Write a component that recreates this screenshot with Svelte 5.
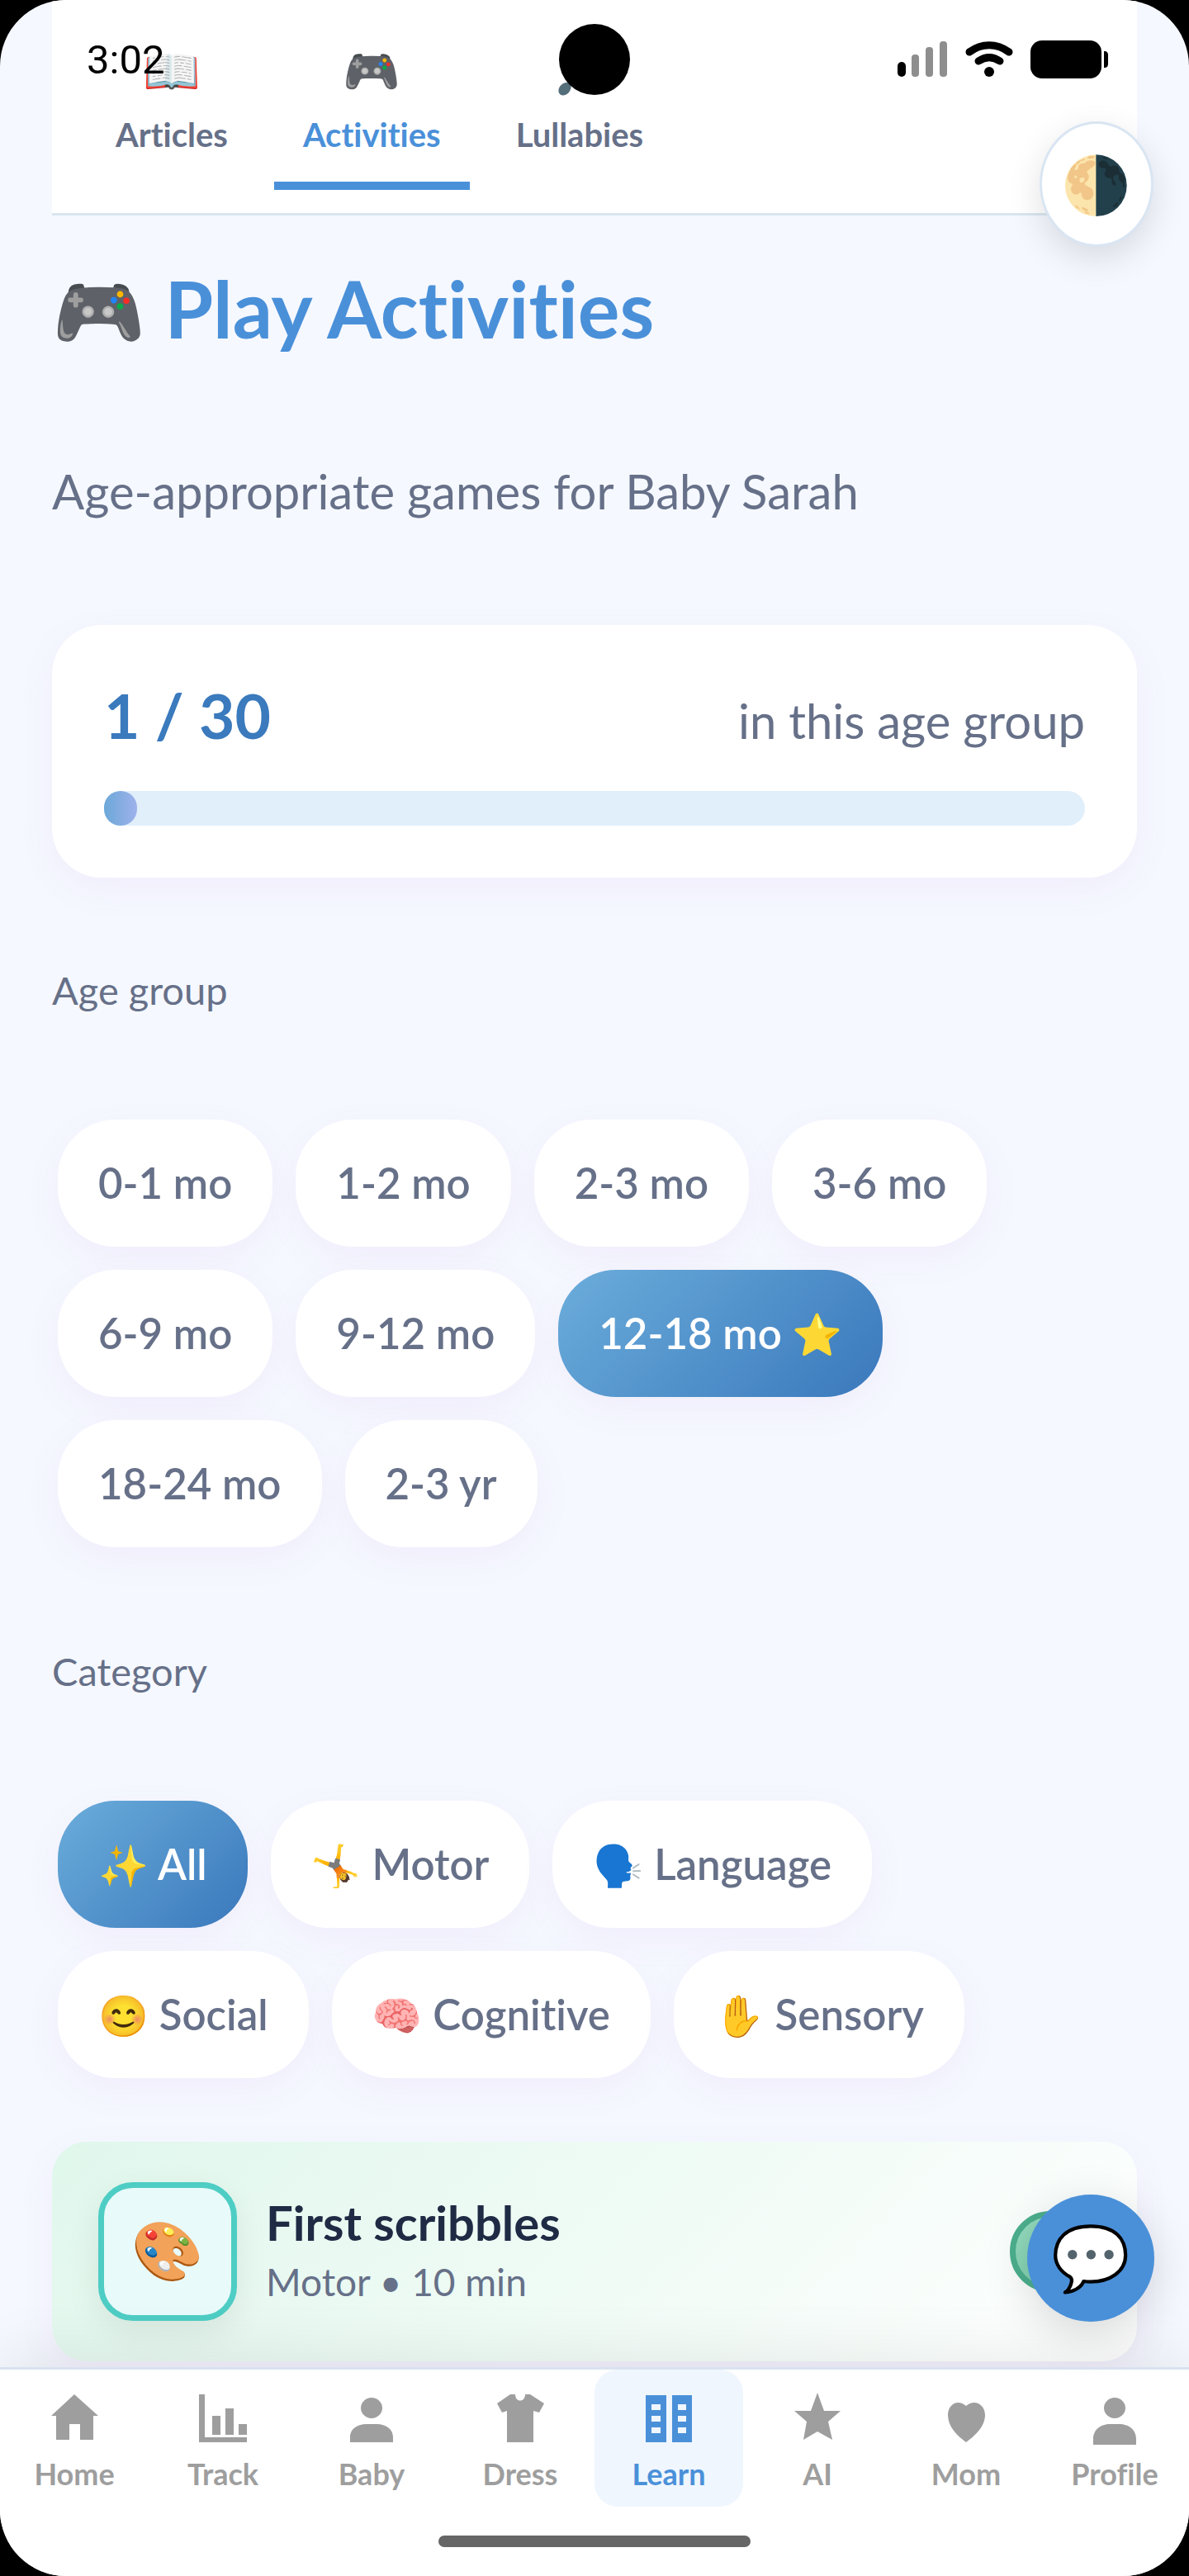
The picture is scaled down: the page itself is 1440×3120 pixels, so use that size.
<!-- App.svelte -->
<script>
	let activeTab = 'Activities';
	let activeAge = '12-18 mo';
	let activeCategory = 'All';
	let activePage = 'Learn';

	const done = 1;
	const total = 30;

	const tabs = [
		{ icon: '📖', name: 'Articles' },
		{ icon: '🎮', name: 'Activities' },
		{ icon: '🎵', name: 'Lullabies' }
	];

	const ages = ['0-1 mo', '1-2 mo', '2-3 mo', '3-6 mo', '6-9 mo', '9-12 mo', '12-18 mo', '18-24 mo', '2-3 yr'];
	const babyAge = '12-18 mo';

	const categories = [
		{ icon: '✨', name: 'All' },
		{ icon: '🤸', name: 'Motor' },
		{ icon: '🗣️', name: 'Language' },
		{ icon: '😊', name: 'Social' },
		{ icon: '🧠', name: 'Cognitive' },
		{ icon: '✋', name: 'Sensory' }
	];

	const pages = [
		{ name: 'Home', path: 'M30 2L59 28H53V57H37V38H24V57H8V28H2Z' },
		{ name: 'Track', path: 'M1 2H8V54H59V60H1ZM17 28H27V51H17ZM33 19H43V51H33ZM49 38H59V51H49Z' },
		{ name: 'Baby', path: 'M30 6a13 12.5 0 0 1 0 25a13 12.5 0 0 1 0-25ZM4 60V54C4 43 14 38 24 38H36C46 38 56 43 56 54V60Z' },
		{ name: 'Dress', path: 'M18 2H24C24 12 36 12 36 2H42L59 13L53 24L46 22V60H14V22L8 24L2 13Z' },
		{ name: 'Learn', path: 'M2 3H27V60H2ZM34 3H58V60H34ZM9 14V21H20V14ZM9 28V35H20V28ZM9 42V49H20V42ZM41 14V21H51V14ZM41 28V35H51V28ZM41 42V49H51V42Z' },
		{ name: 'AI', path: 'M30 0L38 22H58L43 35L48 57L30 47L13 57L17 35L2 22H22Z' },
		{ name: 'Mom', path: 'M30 16C40 7 53 14 53 27C53 41 41 52 30 60C19 52 8 41 8 27C8 14 20 7 30 16Z' },
		{ name: 'Profile', path: 'M30 6a13 12.5 0 0 1 0 25a13 12.5 0 0 1 0-25ZM4 63V56C4 44 14 38 24 38H36C46 38 56 44 56 56V63Z' }
	];
</script>

<div class="screen">
	<div class="status">
		<span class="time">3:02</span>
		<span class="camera"></span>
		<svg class="signals" viewBox="0 0 256 48" aria-hidden="true">
			<rect x="0" y="27" width="10" height="18" rx="5" />
			<g fill="#8e8e8e">
				<rect x="17" y="18" width="9" height="27" rx="4" />
				<rect x="34" y="9" width="9" height="36" rx="4" />
				<rect x="51" y="2" width="9" height="43" rx="4" />
			</g>
			<g fill="none" stroke="#000" stroke-width="9" stroke-linecap="round">
				<path d="M87 15C102 4 120 4 135 15" />
				<path d="M98 26C107 20 115 20 124 26" />
			</g>
			<circle cx="111" cy="39" r="6" />
			<rect x="161" y="1" width="86" height="46" rx="14" />
			<path d="M250 14C254 14 255 16 255 19V29C255 32 254 34 250 34Z" />
		</svg>
	</div>

	<div class="page">
		<header>
			{#each tabs as tab}
				<button class="tab" class:selected={activeTab === tab.name} on:click={() => (activeTab = tab.name)}>
					<span class="tab-icon">{tab.icon}</span>
					<span>{tab.name}</span>
				</button>
			{/each}
		</header>

		<main>
			<h1><span class="emoji">🎮</span> Play Activities</h1>
			<p class="subtitle">Age-appropriate games for Baby Sarah</p>

			<section class="progress">
				<div class="progress-text">
					<strong>{done} / {total}</strong>
					<span>in this age group</span>
				</div>
				<div class="bar">
					<div class="fill" style="width: {(done / total) * 100}%"></div>
				</div>
			</section>

			<h2>Age group</h2>
			<div class="chips">
				{#each ages as age}
					<button class="chip" class:selected={activeAge === age} on:click={() => (activeAge = age)}>
						{age}{#if age === babyAge}{' '}<span class="emoji">⭐</span>{/if}
					</button>
				{/each}
			</div>

			<h2>Category</h2>
			<div class="chips">
				{#each categories as category}
					<button class="chip" class:selected={activeCategory === category.name} on:click={() => (activeCategory = category.name)}>
						<span class="emoji">{category.icon}</span> {category.name}
					</button>
				{/each}
			</div>

			<article class="activity">
				<div class="activity-icon">🎨</div>
				<div class="activity-text">
					<h3>First scribbles</h3>
					<p>Motor • 10 min</p>
				</div>
				<span class="done"></span>
			</article>
		</main>
	</div>

	<button class="theme" aria-label="Theme">🌗</button>

	<nav>
		<button class="chat" aria-label="Chat">💬</button>
		<div class="nav-items">
			{#each pages as page}
				<a href="#{page.name}" class:selected={activePage === page.name} on:click={() => (activePage = page.name)}>
					<svg viewBox="0 0 60 64" aria-hidden="true"><path fill-rule="evenodd" d={page.path} /></svg>
					{page.name}
				</a>
			{/each}
		</div>
		<div class="home-bar"></div>
	</nav>
</div>

<style>
	:global(body) {
		margin: 0;
		background: #000;
	}

	.screen {
		position: relative;
		display: flex;
		flex-direction: column;
		min-height: 100vh;
		overflow: hidden;
		border-radius: 80px;
		background: #f5f8ff;
		color: #667088;
		font-family: 'Lato', 'Noto Color Emoji', sans-serif;
		font-variant-ligatures: none;
	}

	button {
		border: none;
		background: none;
		padding: 0;
		color: inherit;
		font-family: inherit;
		font-variant-ligatures: none;
		cursor: pointer;
	}

	h1, h2, h3, p {
		margin: 0;
	}

	/* status bar */
	.status {
		position: absolute;
		z-index: 2;
		top: 0;
		left: 0;
		right: 0;
		display: grid;
		grid-template-columns: 1fr auto 1fr;
		align-items: center;
		height: 144px;
		padding: 0 97px;
	}

	.time {
		padding-left: 8px;
		color: #000;
		font-family: 'Roboto', sans-serif;
		font-size: 49px;
	}

	.camera {
		width: 86px;
		height: 86px;
		border-radius: 50%;
		background: #000;
	}

	.signals {
		justify-self: end;
		width: 256px;
		height: 48px;
	}

	/* tabs */
	.page {
		padding: 0 63px;
	}

	header {
		display: flex;
		gap: 21px;
		padding: 60px 42px 28px;
		border-bottom: 3px solid #d9e6f0;
		background: #fff;
	}

	.tab {
		display: flex;
		flex-direction: column;
		align-items: center;
		gap: 28px;
		padding: 0 35px 32px;
		border-bottom: 10px solid transparent;
		font-size: 40px;
		font-weight: 700;
		line-height: 50px;
	}

	.tab-icon {
		font-size: 56px;
	}

	.tab.selected {
		border-color: #4a90d9;
		color: #4a90d9;
	}

	/* content */
	h1 {
		margin-top: 52px;
		color: #4a90d9;
		font-size: 95px;
		font-weight: 700;
		line-height: 120px;
	}

	h1 .emoji {
		font-size: 91px;
		line-height: 1;
	}

	.subtitle {
		margin: 122px 0;
		font-size: 58px;
		line-height: 80px;
	}

	.progress {
		padding: 63px;
		border-radius: 60px;
		background: #fff;
		box-shadow: 0 14px 42px rgba(190, 120, 200, 0.08);
	}

	.progress-text {
		display: flex;
		justify-content: space-between;
		align-items: baseline;
		margin-bottom: 46px;
		font-size: 58px;
		line-height: 60px;
	}

	.progress-text strong {
		color: #3a7abd;
		font-size: 75px;
		line-height: 92px;
	}

	.bar {
		border-radius: 21px;
		background: #e1effa;
	}

	.fill {
		height: 42px;
		border-radius: 21px;
		background: linear-gradient(90deg, #6ba8d8, #9fb2ec);
	}

	h2 {
		margin: 104px 0 125px;
		font-size: 47px;
		font-weight: 400;
		line-height: 64px;
	}

	.chips {
		display: flex;
		flex-wrap: wrap;
		gap: 28px;
		padding: 0 7px 14px;
	}

	.chip {
		padding: 0 49px;
		border-radius: 70px;
		background: #fff;
		box-shadow: 0 14px 42px rgba(190, 120, 200, 0.08);
		font-size: 51px;
		font-weight: 600;
		line-height: 154px;
	}

	.chip .emoji {
		font-size: 49px;
		line-height: 1;
	}

	.chip.selected {
		background: linear-gradient(135deg, #6baddb, #3a78bc);
		color: #fff;
	}

	.activity {
		display: flex;
		align-items: center;
		gap: 35px;
		margin: 63px 0 6px;
		padding: 49px 56px;
		border-radius: 42px;
		background: linear-gradient(135deg, #e0f7ec, #fff);
		box-shadow: 0 14px 42px rgba(190, 120, 200, 0.08);
	}

	.activity-icon {
		box-sizing: border-box;
		width: 168px;
		height: 168px;
		border: 7px solid #4ecdc4;
		border-radius: 42px;
		background: #e8fafa;
		box-shadow: 0 14px 42px rgba(0, 0, 0, 0.08);
		font-size: 70px;
		line-height: 148px;
		text-align: center;
	}

	.activity-text {
		flex: 1;
		padding-bottom: 6px;
	}

	h3 {
		color: #1f2a44;
		font-size: 58px;
		line-height: 80px;
	}

	.activity-text p {
		font-size: 46px;
		line-height: 64px;
	}

	.done {
		box-sizing: border-box;
		width: 98px;
		height: 98px;
		border: 7px solid #4caf8e;
		border-radius: 50%;
		background: linear-gradient(135deg, #98dcc0, #70c8a4);
	}

	.theme {
		position: absolute;
		top: 147px;
		right: 43px;
		width: 138px;
		height: 152px;
		border: 3px solid #d9e5f2;
		border-radius: 50%;
		background: #fff;
		box-shadow: 0 14px 42px rgba(0, 0, 0, 0.12);
		font-size: 68px;
	}

	/* bottom navigation */
	nav {
		position: relative;
		margin-top: auto;
		padding-bottom: 35px;
		border-top: 3px solid #d9e3ef;
		background: #fff;
		box-shadow: 0 -14px 70px rgba(0, 0, 0, 0.08);
	}

	.chat {
		position: absolute;
		right: 42px;
		bottom: 308px;
		width: 154px;
		height: 154px;
		border-radius: 50%;
		background: #4a90d9;
		box-shadow: 0 14px 56px rgba(0, 0, 0, 0.15);
		font-size: 77px;
		line-height: 144px;
		padding-bottom: 6px;
	}

	.nav-items {
		display: grid;
		grid-template-columns: repeat(8, 1fr);
	}

	.nav-items a {
		display: flex;
		flex-direction: column;
		align-items: center;
		gap: 12px;
		padding: 28px 0 18px;
		border-radius: 28px;
		color: #9e9e9e;
		font-size: 36px;
		font-weight: 700;
		line-height: 44px;
		text-decoration: none;
	}

	.nav-items a.selected {
		background: #eff6fe;
		color: #4a90d9;
	}

	.nav-items svg {
		width: 60px;
		height: 64px;
		fill: currentColor;
	}

	.home-bar {
		width: 378px;
		height: 14px;
		margin: 35px auto 0;
		border-radius: 7px;
		background: #666;
	}
</style>
